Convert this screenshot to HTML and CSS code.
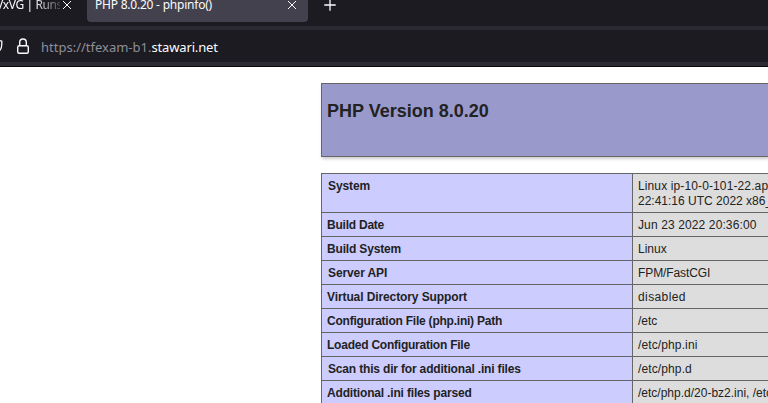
FILE: index.html
```
<!DOCTYPE html>
<html lang="en">
<head>
<meta charset="utf-8">
<title>PHP 8.0.20 - phpinfo()</title>
<link rel="stylesheet" href="styles.css">
</head>
<body>
<header class="browser">
  <div class="tabs">
    <div class="tab tab-back"><span class="tab-title fade">VxVG | Runs</span><svg class="close" viewBox="0 0 10 10"><path d="M1 1l8 8M9 1L1 9"/></svg></div>
    <div class="tab tab-active"><span class="tab-title">PHP 8.0.20 - phpinfo()</span><svg class="close" viewBox="0 0 10 10"><path d="M1 1l8 8M9 1L1 9"/></svg></div>
    <svg class="plus" viewBox="0 0 12 12"><path d="M6 .3v11.4M.3 6h11.4"/></svg>
  </div>
  <div class="address">
    <svg class="shield" viewBox="0 0 3 14"><path d="M0 1.5L1.8 2.2V5C1.8 8 1 10 0 11.5"/></svg>
    <svg class="lock" viewBox="0 0 14 18"><rect x="1.7" y="8.7" width="10.6" height="7.6" rx="1.5"/><path d="M3.7 8.5V5.3a3.3 3.3 0 0 1 6.6 0v3.2"/></svg>
    <div class="url">https://tfexam-b1.<span class="domain">stawari.net</span></div>
  </div>
</header>
<main class="page">
  <div class="version"><h1>PHP Version 8.0.20</h1></div>
  <table class="info">
    <tr><th class="inset snug">System</th><td class="semi">Linux ip-10-0-101-22.ap<br><span class="normal">22:41:16 UTC 2022 x86_</span></td></tr>
    <tr><th class="tight">Build Date</th><td class="semi">Jun 23 2022 20:36:00</td></tr>
    <tr><th class="medium">Build System</th><td>Linux</td></tr>
    <tr><th class="inset snug">Server API</th><td class="snug">FPM/FastCGI</td></tr>
    <tr><th class="snug">Virtual Directory Support</th><td class="wide">disabled</td></tr>
    <tr><th class="tight">Configuration File (php.ini) Path</th><td>/etc</td></tr>
    <tr><th class="tight">Loaded Configuration File</th><td class="semi">/etc/php.ini</td></tr>
    <tr><th class="inset medium">Scan this dir for additional .ini files</th><td class="semi">/etc/php.d</td></tr>
    <tr><th class="medium">Additional .ini files parsed</th><td>/etc/php.d/20-bz2.ini, /etc</td></tr>
  </table>
</main>
</body>
</html>
```
FILE: styles.css
```
* { box-sizing: border-box; }
html, body { height: 100%; }
body {
  margin: 0;
  background: #fff;
  color: #222;
  font-family: "Liberation Sans", Arial, sans-serif;
  overflow: hidden;
}
svg { display: block; flex: none; fill: none; stroke: #fbfbfe; }
.browser {
  height: 67px;
  background: #1c1b22;
  color: #fbfbfe;
  border-bottom: 1px solid #08070c;
}
.tabs { display: flex; height: 26px; }
.tab { display: flex; height: 22px; white-space: nowrap; }
.tab-back { width: 87px; }
.tab-active {
  width: 221px;
  padding-left: 8px;
  background: #42414d;
  border-radius: 0 0 4px 4px;
}
.tab-title {
  font: 12px/16px "Noto Sans", sans-serif;
  letter-spacing: -0.22px;
  margin-top: -3px;
}
.tab-back .tab-title { width: 64px; margin-left: -4px; letter-spacing: -0.4px; }
.tab-active .tab-title { width: 192px; }
.fade {
  overflow: hidden;
  mask-image: linear-gradient(to right, #000 38px, transparent 70px);
}
.close { width: 10px; height: 10px; }
.tab-back .close { margin-left: 2px; }
.plus { width: 12px; height: 12px; margin: -1px 0 0 16px; stroke-width: 1.3; }
.address {
  display: flex;
  height: 40px;
  border-top: 4px solid #2b2a33;
  border-bottom: 4px solid #2b2a33;
}
.shield { width: 3px; height: 14px; margin-top: 9px; stroke-width: 1.3; }
.lock { width: 14px; height: 18px; margin: 7px 0 0 13px; stroke-width: 1.4; }
.url {
  margin: 7px 0 0 11px;
  font: 13px/20px "Noto Sans", sans-serif;
  color: #8f8f98;
}
.domain { color: #fbfbfe; letter-spacing: -0.15px; }
.page { padding: 16px 0 0 321px; }
.version {
  height: 74px;
  padding: 17px 5px;
  background: #9999cc;
  border: 1px solid #666;
  border-right: 0;
  box-shadow: 1px 2px 3px #ccc;
}
h1 { margin: 0; font-size: 18px; line-height: 21px; }
.info {
  width: 100%;
  margin-top: 16px;
  border-collapse: collapse;
  table-layout: fixed;
  font-size: 12px;
  line-height: 15px;
}
th, td {
  padding: 5px 5px 3px;
  border: 1px solid #666;
  text-align: left;
  vertical-align: top;
  white-space: nowrap;
}
th { width: 311px; background: #ccccff; }
td { background: #ddd; border-right: 0; }
.inset { padding-left: 6px; }
.tight { letter-spacing: -0.23px; }
.medium { letter-spacing: -0.17px; }
.snug { letter-spacing: -0.1px; }
.normal { letter-spacing: 0; }
.semi { letter-spacing: 0.12px; }
.wide { letter-spacing: 0.4px; }
```
